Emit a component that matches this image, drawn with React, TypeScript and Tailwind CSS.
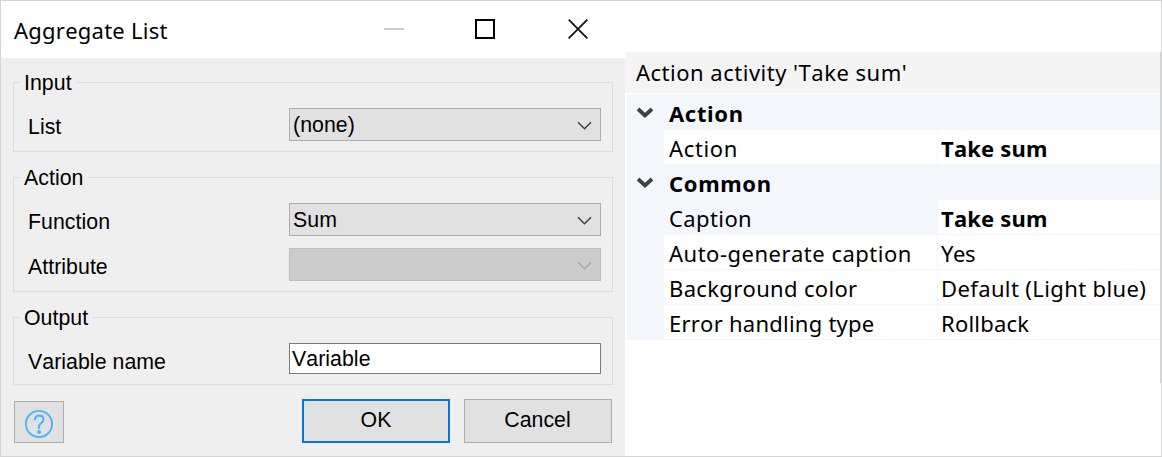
import type { ReactNode } from "react";

function ComboChevron({ disabled }: { disabled?: boolean }) {
  return (
    <svg className="mt-3 mr-2 shrink-0" width="15" height="9" viewBox="0 0 15 9" fill="none">
      <path d="M1 1.2 7.5 7.7 14 1.2" stroke={disabled ? "#a6a6a6" : "#404040"} strokeWidth="1.5" />
    </svg>
  );
}

function Combo({ value, disabled }: { value?: string; disabled?: boolean }) {
  return (
    <div
      className={
        disabled
          ? "flex h-[33px] w-[312px] justify-between border border-[#bfbfbf] bg-[#cccccc]"
          : "flex h-[33px] w-[312px] justify-between border border-[#adadad] bg-[#e1e1e1]"
      }
    >
      <span className="pt-1 pl-[3px]">{value}</span>
      <ComboChevron disabled={disabled} />
    </div>
  );
}

function Group({ title, className, children }: { title: string; className: string; children: ReactNode }) {
  return (
    <section className={`flex flex-col items-start border border-[#dcdcdc] ${className}`}>
      <h2 className="-mt-3 ml-1.5 h-6 bg-[#efefef] pr-[5px] pl-1">{title}</h2>
      <div className="mt-[13px] flex flex-col gap-3">{children}</div>
    </section>
  );
}

function Field({ label, children }: { label: string; children: ReactNode }) {
  return (
    <div className="flex items-start">
      <span className="w-[275px] pt-[7px] pl-[14px]">{label}</span>
      {children}
    </div>
  );
}

function AggregateDialog() {
  return (
    <div className="flex w-[624px] shrink-0 flex-col text-[21.3px] leading-6 tracking-[0.05px]">
      <header className="flex h-[57px] items-start bg-white">
        <h1 className="w-[383px] pt-[13px] pl-[13px] font-['Noto_Sans',sans-serif] text-[22px] leading-8 tracking-[0.24px]">
          Aggregate List
        </h1>
        <span className="mt-[27px] h-0.5 w-5 bg-[#cccccc]" />
        <span className="mt-[18px] ml-[71px] size-5 border-2 border-black" />
        <svg className="mt-[18px] ml-[73px]" width="20" height="20" viewBox="0 0 20 20">
          <path d="M.7.7 19.3 19.3M19.3.7.7 19.3" stroke="#111" strokeWidth="1.8" />
        </svg>
      </header>
      <div className="flex h-[398px] flex-col bg-[#efefef] pt-6 pl-3">
        <Group title="Input" className="h-[70px] w-[600px]">
          <Field label="List">
            <Combo value="(none)" />
          </Field>
        </Group>
        <Group title="Action" className="mt-[25px] h-[115px] w-[600px]">
          <Field label="Function">
            <Combo value="Sum" />
          </Field>
          <Field label="Attribute">
            <Combo disabled />
          </Field>
        </Group>
        <Group title="Output" className="mt-[25px] h-[68px] w-[600px]">
          <Field label="Variable name">
            <div className="h-[31px] w-[312px] border border-[#7a7a7a] bg-white pt-[3px] pl-0.5">Variable</div>
          </Field>
        </Group>
        <div className="mt-[14px] flex items-end pl-px">
          <button className="flex h-[42px] w-[50px] items-center justify-center border border-[#adadad] bg-[#e1e1e1] pt-1">
            <svg width="30" height="30" viewBox="0 0 30 30" fill="none" stroke="#4db5fa">
              <circle cx="15" cy="15" r="13.1" strokeWidth="1.9" />
              <path
                d="M10.8 11.2c0-3 1.9-4.6 4.4-4.6s4.2 1.6 4.2 3.9c0 3.3-4.4 3.8-4.4 6.6v3"
                strokeWidth="2.1"
              />
              <circle cx="15" cy="23" r="2" fill="#4db5fa" stroke="none" />
            </svg>
          </button>
          <button className="ml-[238px] flex h-11 w-[148px] justify-center border-2 border-[#0078d7] bg-[#e1e1e1] pt-[7px]">
            OK
          </button>
          <button className="ml-[14px] flex h-11 w-[148px] justify-center border border-[#adadad] bg-[#e1e1e1] pt-2 pr-px">
            Cancel
          </button>
        </div>
      </div>
    </div>
  );
}

function PanelHeading({ title, className }: { title: string; className: string }) {
  return (
    <div className={`flex items-end bg-[#f3f7fc] ${className}`}>
      <svg className="mb-[11px] ml-[9px]" width="20" height="12" viewBox="0 0 20 12" fill="none">
        <path d="M2 2 9 8.5 16 2" stroke="#404040" strokeWidth="3.8" />
      </svg>
      <span className="ml-[13px] pb-px leading-8 font-bold tracking-[0.65px]">{title}</span>
    </div>
  );
}

type PropertyProps = {
  name: string;
  value: string;
  nameTracking: string;
  valueTracking: string;
  bold?: boolean;
  selected?: boolean;
};

function Property({ name, value, nameTracking, valueTracking, bold, selected }: PropertyProps) {
  return (
    <div className="flex h-[35px] bg-[#f3f7fc] pl-[37px] leading-8">
      <span className={`mb-px w-[273px] pt-0.5 pl-[5px] ${selected ? "" : "bg-white"} ${nameTracking}`}>{name}</span>
      <span className={`mb-px ml-px flex-1 bg-white pt-0.5 pl-[3px] ${bold ? "font-bold" : ""} ${valueTracking}`}>
        {value}
      </span>
    </div>
  );
}

function PropertiesPanel() {
  return (
    <div className="mt-[51px] flex h-[331px] w-[536px] shrink-0 flex-col border-r border-[#d4d4d4] bg-white font-['Noto_Sans',sans-serif] text-[22px] whitespace-nowrap">
      <h2 className="h-[41px] bg-[#f4f4f4] pt-1 pl-[11px] leading-8 tracking-[0.5px]">Action activity 'Take sum'</h2>
      <div className="mt-px ml-0.5 flex flex-col">
        <PanelHeading title="Action" className="h-9" />
        <Property name="Action" value="Take sum" nameTracking="tracking-[0.65px]" valueTracking="tracking-[0.2px]" bold />
        <PanelHeading title="Common" className="h-[35px]" />
        <Property name="Caption" value="Take sum" nameTracking="tracking-[0.4px]" valueTracking="tracking-[0.2px]" bold selected />
        <Property name="Auto-generate caption" value="Yes" nameTracking="tracking-[0.5px]" valueTracking="tracking-[-0.4px]" />
        <Property
          name="Background color"
          value="Default (Light blue)"
          nameTracking="tracking-[0.33px]"
          valueTracking="tracking-[0.38px]"
        />
        <Property name="Error handling type" value="Rollback" nameTracking="tracking-[0.24px]" valueTracking="tracking-[0.2px]" />
      </div>
    </div>
  );
}

export default function App() {
  return (
    <main className="flex h-[457px] w-[1162px] overflow-hidden border border-[#d4d4d4] bg-white font-['Liberation_Sans',sans-serif] text-black [font-kerning:none]">
      <AggregateDialog />
      <PropertiesPanel />
    </main>
  );
}
